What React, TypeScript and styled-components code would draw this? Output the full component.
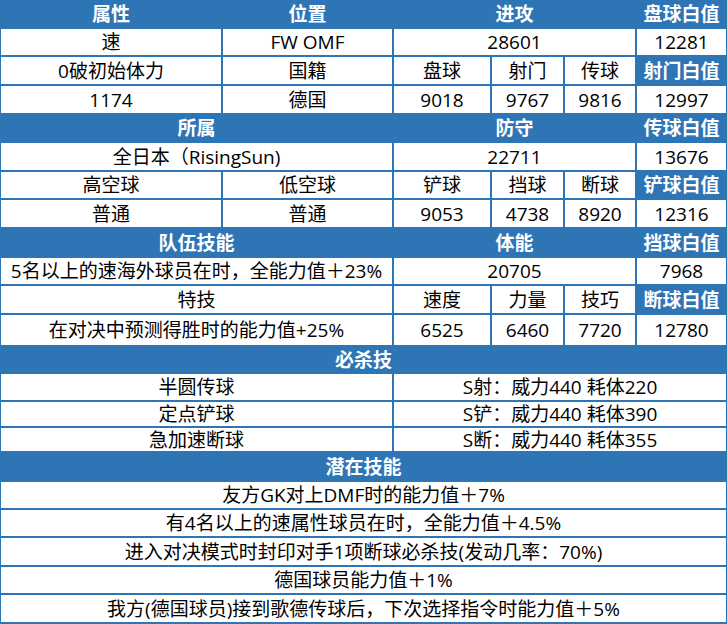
import React from 'react';
import styled, { createGlobalStyle } from 'styled-components';

const BLUE = '#2e75b6';

const Global = createGlobalStyle`
  html, body { margin: 0; padding: 0; background: #ffffff; }
  body { font-family: "Open Sans", "Noto Sans CJK SC", sans-serif; }
`;

const Sheet = styled.div`
  width: 727px;
  height: 624px;
  box-sizing: border-box;
  background: ${BLUE};
  padding: 0 1px 2px 1px;
  display: flex;
  flex-direction: column;
  gap: 2px;
`;

const Row = styled.div<{ $h: number }>`
  display: grid;
  grid-template-columns: 220px 169px 96px 71px 70px 89px;
  column-gap: 2px;
  height: ${(p) => p.$h}px;
`;

const Cell = styled.div<{ $span?: number; $head?: boolean }>`
  grid-column: span ${(p) => p.$span ?? 1};
  display: flex;
  align-items: center;
  justify-content: center;
  min-height: 0;
  background: ${(p) => (p.$head ? 'transparent' : '#ffffff')};
  color: ${(p) => (p.$head ? '#ffffff' : '#000000')};
  font-weight: ${(p) => (p.$head ? 700 : 400)};
  font-size: 19px;
  line-height: 20px;
  white-space: nowrap;
`;

type C = [string, number?, boolean?];

const rows: { h: number; cells: C[] }[] = [
  { h: 27, cells: [['属性', 1, true], ['位置', 1, true], ['进攻', 3, true], ['盘球白值', 1, true]] },
  { h: 26, cells: [['速'], ['FW OMF'], ['28601', 3], ['12281']] },
  { h: 27, cells: [['0破初始体力'], ['国籍'], ['盘球'], ['射门'], ['传球'], ['射门白值', 1, true]] },
  { h: 27, cells: [['1174'], ['德国'], ['9018'], ['9767'], ['9816'], ['12997']] },
  { h: 26, cells: [['所属', 2, true], ['防守', 3, true], ['传球白值', 1, true]] },
  { h: 27, cells: [['全日本（RisingSun)', 2], ['22711', 3], ['13676']] },
  { h: 26, cells: [['高空球'], ['低空球'], ['铲球'], ['挡球'], ['断球'], ['铲球白值', 1, true]] },
  { h: 27, cells: [['普通'], ['普通'], ['9053'], ['4738'], ['8920'], ['12316']] },
  { h: 27, cells: [['队伍技能', 2, true], ['体能', 3, true], ['挡球白值', 1, true]] },
  { h: 26, cells: [['5名以上的速海外球员在时，全能力值＋23%', 2], ['20705', 3], ['7968']] },
  { h: 27, cells: [['特技', 2], ['速度'], ['力量'], ['技巧'], ['断球白值', 1, true]] },
  { h: 30, cells: [['在对决中预测得胜时的能力值+25%', 2], ['6525'], ['6460'], ['7720'], ['12780']] },
  { h: 25, cells: [['必杀技', 6, true]] },
  { h: 26, cells: [['半圆传球', 2], ['S射：威力440 耗体220', 4]] },
  { h: 24, cells: [['定点铲球', 2], ['S铲：威力440 耗体390', 4]] },
  { h: 23, cells: [['急加速断球', 2], ['S断：威力440 耗体355', 4]] },
  { h: 27, cells: [['潜在技能', 6, true]] },
  { h: 26, cells: [['友方GK对上DMF时的能力值＋7%', 6]] },
  { h: 26, cells: [['有4名以上的速属性球员在时，全能力值＋4.5%', 6]] },
  { h: 27, cells: [['进入对决模式时封印对手1项断球必杀技(发动几率：70%)', 6]] },
  { h: 26, cells: [['德国球员能力值＋1%', 6]] },
  { h: 27, cells: [['我方(德国球员)接到歌德传球后，下次选择指令时能力值＋5%', 6]] },
];

export default function App() {
  return (
    <>
      <Global />
      <Sheet>
        {rows.map((r, i) => (
          <Row key={i} $h={r.h}>
            {r.cells.map(([t, span, head], j) => (
              <Cell key={j} $span={span} $head={head}>
                {t}
              </Cell>
            ))}
          </Row>
        ))}
      </Sheet>
    </>
  );
}
